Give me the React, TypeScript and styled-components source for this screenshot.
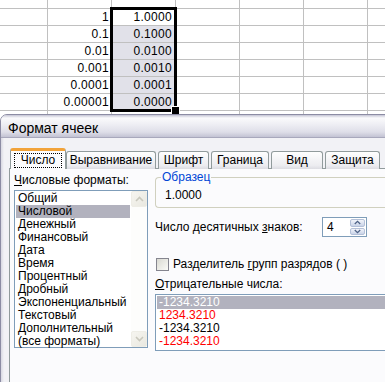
import { Fragment } from 'react'
import styled, { createGlobalStyle } from 'styled-components'

const Global = createGlobalStyle`
   html, body { margin: 0; padding: 0; background: #fff; }
   body { font-family: 'Liberation Sans', Arial, sans-serif; }
`

const rows = [
   ['1', '1.0000'],
   ['0.1', '0.1000'],
   ['0.01', '0.0100'],
   ['0.001', '0.0010'],
   ['0.0001', '0.0001'],
   ['0.00001', '0.0000'],
]

const formats = [
   'Общий', 'Числовой', 'Денежный', 'Финансовый', 'Дата', 'Время', 'Процентный',
   'Дробный', 'Экспоненциальный', 'Текстовый', 'Дополнительный', '(все форматы)',
]

const negatives = [
   { text: '-1234.3210', red: false },
   { text: '1234.3210', red: true },
   { text: '-1234.3210', red: false },
   { text: '-1234.3210', red: true },
]

const tabs = [
   { label: 'Выравнивание', w: 90 },
   { label: 'Шрифт', w: 51 },
   { label: 'Граница', w: 58 },
   { label: 'Вид', w: 52 },
   { label: 'Защита', w: 55 },
]

const Chevron = ({ down, color }: { down?: boolean; color: string }) => (
   <svg width='9' height='6' viewBox='0 0 9 6'>
      <polyline
         points={down ? '1,1 4.5,4.5 8,1' : '1,5 4.5,1.5 8,5'}
         fill='none'
         stroke={color}
         strokeWidth='1.6'
      />
   </svg>
)

const App = () => {
   return (
      <Page>
         <Global />
         <Sheet>
            {[0, ...rows.map((_, i) => i + 1), 7].map(r => (
               <Fragment key={r}>
                  {[0, 1, 2, 3, 4, 5, 6].map(c => {
                     const data = r >= 1 && r <= 6 ? rows[r - 1] : null
                     const text = data && (c === 1 ? data[0] : c === 2 ? data[1] : '')
                     return (
                        <Cell key={c} $row={r} $col={c} $shaded={c === 2 && r >= 2 && r <= 6}>
                           {text}
                        </Cell>
                     )
                  })}
               </Fragment>
            ))}
            <Selection>
               <Handle />
            </Selection>
         </Sheet>

         <Dialog>
            <TitleBar>Формат ячеек</TitleBar>
            <Body>
               <Tabs>
                  <ActiveTab>
                     <Focus>Число</Focus>
                  </ActiveTab>
                  {tabs.map(t => (
                     <Tab key={t.label} $w={t.w}>
                        {t.label}
                     </Tab>
                  ))}
               </Tabs>

               <TabPanel>
                  <LeftColumn>
                     <Label>
                        <u>Ч</u>исловые форматы:
                     </Label>
                     <ListBox $h={158}>
                        <Items>
                           {formats.map(f => (
                              <Item key={f} $selected={f === 'Числовой'}>
                                 {f}
                              </Item>
                           ))}
                        </Items>
                        <ScrollBar>
                           <ScrollButton>
                              <Chevron color='#c9c8bd' />
                           </ScrollButton>
                           <ScrollButton>
                              <Chevron down color='#c9c8bd' />
                           </ScrollButton>
                        </ScrollBar>
                     </ListBox>
                  </LeftColumn>

                  <RightColumn>
                     <GroupBox>
                        <Legend>Образец</Legend>
                        <Sample>1.0000</Sample>
                     </GroupBox>

                     <DecimalsRow>
                        <Label>
                           Число десятичных <u>з</u>наков:
                        </Label>
                        <SpinBox>
                           <SpinValue>4</SpinValue>
                           <SpinButtons>
                              <SpinButton>
                                 <Chevron color='#4d6185' />
                              </SpinButton>
                              <SpinButton>
                                 <Chevron down color='#4d6185' />
                              </SpinButton>
                           </SpinButtons>
                        </SpinBox>
                     </DecimalsRow>

                     <CheckRow>
                        <CheckBox />
                        <Label>
                           Разделитель <u>г</u>рупп разрядов ( )
                        </Label>
                     </CheckRow>

                     <Label>
                        <u>О</u>трицательные числа:
                     </Label>
                     <ListBox $h={57}>
                        <Items>
                           {negatives.map((n, i) => (
                              <Item key={i} $selected={i === 0} $red={n.red}>
                                 {n.text}
                              </Item>
                           ))}
                        </Items>
                     </ListBox>
                  </RightColumn>
               </TabPanel>
            </Body>
         </Dialog>
      </Page>
   )
}

const Page = styled.div`
   position: relative;
   width: 385px;
   height: 382px;
   overflow: hidden;
   background: #fff;
   font-size: 12px;
   color: #000;
`

const Sheet = styled.div`
   position: relative;
   display: grid;
   grid-template-columns: 48px repeat(6, 64px);
   grid-template-rows: 9px repeat(6, 17px) 4px;
   width: 432px;
   height: 115px;
`

const Cell = styled.div<{ $row: number; $col: number; $shaded: boolean }>`
   box-sizing: border-box;
   border-right: 1px solid #c0c0c0;
   border-bottom: ${p => (p.$row === 7 ? 'none' : '1px solid #c0c0c0')};
   background: ${p => (p.$shaded ? '#e1e1e9' : '#fff')};
   text-align: right;
   padding-right: ${p => (p.$col === 2 ? 3 : 2)}px;
   line-height: 16px;
   font-size: 12px;
   letter-spacing: 0.3px;
   color: #000;
   overflow: hidden;
   white-space: nowrap;
`

const Selection = styled.div`
   position: absolute;
   left: 110px;
   top: 7px;
   width: 67px;
   height: 105px;
   box-sizing: border-box;
   border: 3px solid #000;
`

const Handle = styled.div`
   position: absolute;
   right: -6px;
   bottom: -6px;
   width: 7px;
   height: 7px;
   background: #000;
   border: 1px solid #fff;
`

const Dialog = styled.div`
   position: absolute;
   left: 0;
   top: 114px;
   width: 410px;
   height: 290px;
   box-sizing: border-box;
   border: 1px solid #8c8ca4;
   border-top-left-radius: 7px;
   background: #eaeaf0;
   overflow: hidden;
`

const TitleBar = styled.div`
   height: 23px;
   box-sizing: border-box;
   padding: 4px 0 0 7px;
   line-height: 18px;
   font-size: 14px;
   color: #000;
   background: linear-gradient(
      to bottom,
      #c4c4d4 0px,
      #fafafc 3px,
      #efeff4 9px,
      #dedee8 17px,
      #bdbdcf 23px
   );
   border-bottom: 1px solid #a8a8bc;
`

const Body = styled.div`
   padding: 10px 0 0 8px;
   background: linear-gradient(to right, #d8d8e2 0px, #f2f2f6 3px);
   height: 100%;
`

const Tabs = styled.div`
   display: flex;
   align-items: flex-end;
   gap: 2px;
   height: 21px;
   padding-left: 1px;
   position: relative;
   z-index: 1;
`

const ActiveTab = styled.div`
   box-sizing: border-box;
   width: 56px;
   height: 21px;
   margin-right: -2px;
   background: #fcfcfe;
   border: 1px solid #919b9c;
   border-top: 3px solid #f2a33a;
   border-bottom: none;
   border-radius: 3px 3px 0 0;
   display: flex;
   justify-content: center;
   padding-top: 3px;
`

const Focus = styled.span`
   display: block;
   width: 46px;
   height: 13px;
   line-height: 12px;
   text-align: center;
   outline: 1px dotted #000;
   outline-offset: 0;
`

const Tab = styled.div<{ $w: number }>`
   box-sizing: border-box;
   width: ${p => p.$w}px;
   height: 18px;
   line-height: 17px;
   text-align: center;
   border: 1px solid #919b9c;
   border-bottom: none;
   border-radius: 3px 3px 0 0;
   background: linear-gradient(to bottom, #fefefe, #ececf0 80%, #dcdce2);
   white-space: nowrap;
`

const TabPanel = styled.div`
   display: grid;
   grid-template-columns: 134px 1fr;
   column-gap: 7px;
   margin-top: -1px;
   padding: 4px 0 0 4px;
   height: 260px;
   background: #fbfbfd;
   border: 1px solid #919b9c;
`

const LeftColumn = styled.div`
   display: flex;
   flex-direction: column;
`

const RightColumn = styled.div`
   display: flex;
   flex-direction: column;
`

const Label = styled.div`
   line-height: 15px;
   white-space: nowrap;

   u {
      text-underline-offset: 1px;
   }
`

const ListBox = styled.div<{ $h: number }>`
   display: flex;
   box-sizing: border-box;
   height: ${p => p.$h}px;
   margin-top: 2px;
   border: 1px solid #7f9db9;
   background: #fff;
`

const Items = styled.div`
   flex: 1;
   padding: 1px 1px 0 1px;
`

const Item = styled.div<{ $selected?: boolean; $red?: boolean }>`
   height: 13px;
   line-height: 13px;
   padding-left: 2px;
   white-space: nowrap;
   background: ${p => (p.$selected ? '#b2b2be' : 'transparent')};
   color: ${p => (p.$selected ? '#fff' : p.$red ? '#ff0000' : '#000')};

   ${LeftColumn} & {
      color: #000;
   }
`

const ScrollBar = styled.div`
   width: 16px;
   display: flex;
   flex-direction: column;
   justify-content: space-between;
   background: #fdfdfc;
`

const ScrollButton = styled.div`
   box-sizing: border-box;
   height: 16px;
   border: 1px solid #eeede6;
   border-radius: 2px;
   background: linear-gradient(135deg, #f6f5f0, #e9e8e0);
   display: flex;
   align-items: center;
   justify-content: center;
`

const GroupBox = styled.div`
   position: relative;
   height: 31px;
   margin-top: 4px;
   border: 1px solid #d0d0bf;
   border-right: none;
   border-radius: 4px 0 0 4px;
   padding: 10px 0 0 9px;
   box-sizing: border-box;
`

const Legend = styled.span`
   position: absolute;
   left: 5px;
   top: -8px;
   padding: 0 1px;
   line-height: 14px;
   color: #0046d5;
   background: #fbfbfd;
`

const Sample = styled.div`
   line-height: 14px;
`

const DecimalsRow = styled.div`
   display: flex;
   align-items: center;
   justify-content: space-between;
   width: 212px;
   margin-top: 9px;
`

const SpinBox = styled.div`
   display: flex;
   box-sizing: border-box;
   width: 45px;
   height: 20px;
   border: 1px solid #7f9db9;
   background: #fff;
   padding: 1px;
`

const SpinValue = styled.div`
   flex: 1;
   line-height: 16px;
   padding-left: 3px;
`

const SpinButtons = styled.div`
   display: flex;
   flex-direction: column;
   gap: 1px;
   width: 15px;
`

const SpinButton = styled.div`
   flex: 1;
   box-sizing: border-box;
   border: 1px solid #b4c0d8;
   border-radius: 2px;
   background: linear-gradient(to bottom, #f2f4fa, #c9d3e8);
   display: flex;
   align-items: center;
   justify-content: center;

   svg {
      width: 7px;
      height: 5px;
   }
`

const CheckRow = styled.div`
   display: flex;
   align-items: center;
   gap: 4px;
   margin: 20px 0 5px 1px;
`

const CheckBox = styled.div`
   box-sizing: border-box;
   width: 13px;
   height: 13px;
   border: 1px solid #85858f;
   background: linear-gradient(135deg, #d9d9d2, #fbfbf8);
`

export default App
